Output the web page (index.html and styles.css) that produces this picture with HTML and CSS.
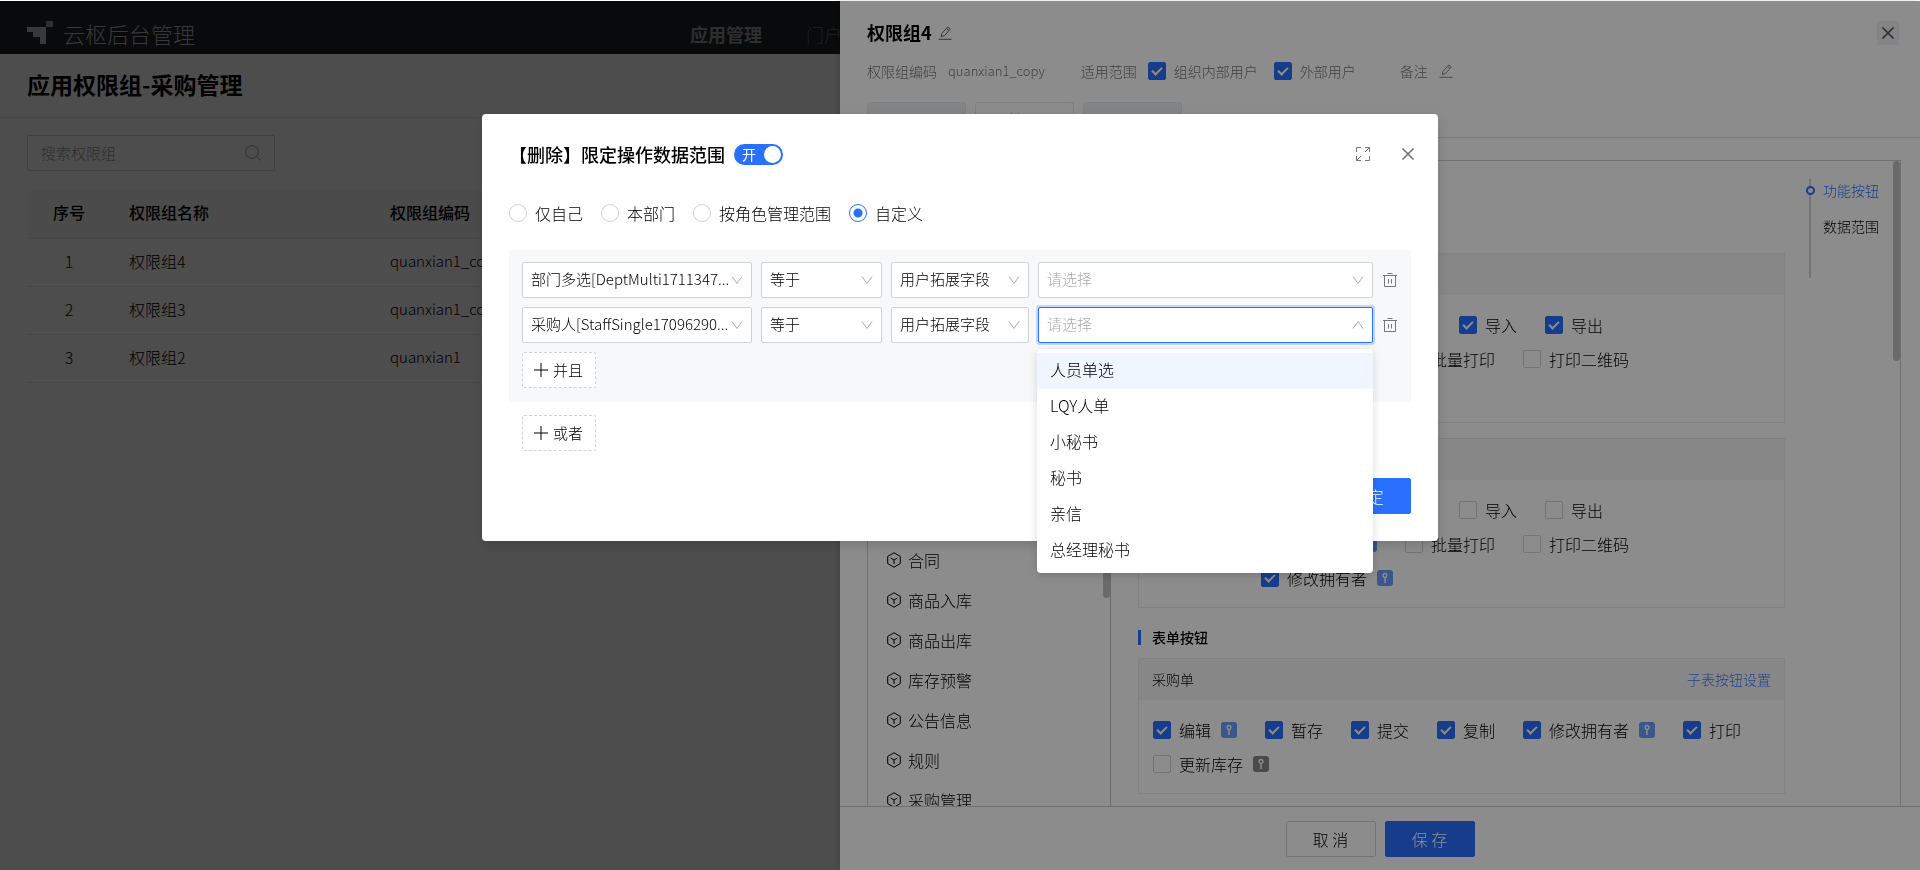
FILE: index.html
```html
<!DOCTYPE html>
<html lang="zh-CN">
<head>
  <meta charset="UTF-8">
  <meta name="viewport" content="width=device-width, initial-scale=1.0">
  <title>云枢后台管理</title>
  <link rel="stylesheet" href="styles.css">
</head>
<body>
  <!-- Shared icons -->
  <svg class="sprite" aria-hidden="true">
    <symbol id="i-down" viewBox="0 0 12 12"><path d="M1 2.5l5 7 5-7" fill="none" stroke="currentColor"/></symbol>
    <symbol id="i-up" viewBox="0 0 12 12"><path d="M1 9.5l5-7 5 7" fill="none" stroke="currentColor"/></symbol>
    <symbol id="i-close" viewBox="0 0 14 14"><path d="M1.5 1.5l11 11M12.5 1.5l-11 11" fill="none" stroke="currentColor" stroke-width="1.7"/></symbol>
    <symbol id="i-edit" viewBox="0 0 14 14"><path d="M.5 13.3h13M3.2 10.6l.7-3.2L9.8 1l2.4 2.2-5.8 6.5zM8.6 2.4l2.3 2.1" fill="none" stroke="currentColor"/></symbol>
    <symbol id="i-trash" viewBox="0 0 14 14"><path d="M0 2.5h14M4.5.5h5M1.5 2.5v11h11v-11M5.5 6v4.5M8.5 6v4.5" fill="none" stroke="currentColor"/></symbol>
    <symbol id="i-plus" viewBox="0 0 14 14"><path d="M7 0v14M0 7h14" fill="none" stroke="currentColor"/></symbol>
    <symbol id="i-box" viewBox="0 0 16 16"><path d="M8 .8l6.3 3.6v7.2L8 15.2l-6.3-3.6V4.4zM4.6 6L8 8l3.4-2M8 8v4" fill="none" stroke="currentColor"/></symbol>
    <symbol id="i-key" viewBox="0 0 16 16"><circle cx="8" cy="5.4" r="1.9" fill="none" stroke="#fff" stroke-width="1.3"/><path d="M8 7.3v5.7" stroke="#fff" stroke-width="1.5"/></symbol>
  </svg>

  <div class="app">
    <header class="topbar">
      <div class="brand">
        <svg class="logo" width="26" height="24" viewBox="0 0 26 24">
          <path d="M0 6h19v17h-6v-7H6v-5H0z" fill="#bbb"/>
          <path d="M19 0h7v6h-7z" fill="#999"/>
        </svg>
        云枢后台管理
      </div>
      <nav class="topnav">
        <a href="#" class="active">应用管理</a>
        <a href="#">门户管理</a>
      </nav>
    </header>

    <h1 class="page-title">应用权限组-采购管理</h1>

    <main class="page">
      <div class="search">
        <input type="text" placeholder="搜索权限组" aria-label="搜索权限组">
        <svg width="16" height="16" viewBox="0 0 16 16" fill="none" stroke="currentColor"><circle cx="7" cy="7" r="6.3"/><path d="M11.5 11.5l4 4"/></svg>
      </div>
      <table class="list">
        <thead>
          <tr><th class="no">序号</th><th class="name">权限组名称</th><th>权限组编码</th></tr>
        </thead>
        <tbody>
          <tr><td class="no">1</td><td>权限组4</td><td class="code">quanxian1_copy</td></tr>
          <tr><td class="no">2</td><td>权限组3</td><td class="code">quanxian1_copy</td></tr>
          <tr><td class="no">3</td><td>权限组2</td><td class="code">quanxian1</td></tr>
        </tbody>
      </table>
    </main>
  </div>

  <div class="mask"></div>

  <aside class="drawer">
    <div class="drawer-head">
      <div class="drawer-title">
        <h2>权限组4</h2>
        <svg class="edit" width="14" height="14"><use href="#i-edit"/></svg>
        <button class="drawer-close" aria-label="关闭"><svg width="14" height="14"><use href="#i-close"/></svg></button>
      </div>
      <div class="drawer-info">
        <div class="info"><span>权限组编码</span><span class="info-code">quanxian1_copy</span></div>
        <div class="info">
          <span>适用范围</span>
          <div class="scope">
            <label class="check"><input type="checkbox" checked>组织内部用户</label>
            <label class="check"><input type="checkbox" checked>外部用户</label>
          </div>
        </div>
        <div class="info"><span>备注</span><svg class="edit thin" width="14" height="14"><use href="#i-edit"/></svg></div>
      </div>
      <div class="tabs">
        <button class="tab" aria-label="成员"></button>
        <button class="tab active">管理</button>
        <button class="tab" aria-label="其他"></button>
      </div>
    </div>

    <div class="drawer-body">
      <div class="tree">
        <ul>
          <li><svg width="16" height="16"><use href="#i-box"/></svg>合同</li>
          <li><svg width="16" height="16"><use href="#i-box"/></svg>商品入库</li>
          <li><svg width="16" height="16"><use href="#i-box"/></svg>商品出库</li>
          <li><svg width="16" height="16"><use href="#i-box"/></svg>库存预警</li>
          <li><svg width="16" height="16"><use href="#i-box"/></svg>公告信息</li>
          <li><svg width="16" height="16"><use href="#i-box"/></svg>规则</li>
          <li><svg width="16" height="16"><use href="#i-box"/></svg>采购管理</li>
        </ul>
        <span class="thumb tree-thumb"></span>
      </div>

      <div class="perms">
        <h3 class="section">功能按钮</h3>
        <section class="card">
          <div class="card-head">列表按钮</div>
          <div class="card-body indent">
            <label class="check"><input type="checkbox" checked>新增</label>
            <label class="check"><input type="checkbox" checked>删除<svg class="key" width="16" height="16"><use href="#i-key"/></svg></label>
            <label class="check"><input type="checkbox" checked>导入</label>
            <label class="check"><input type="checkbox" checked>导出</label>
            <label class="check"><input type="checkbox">批量修改<svg class="key" width="16" height="16"><use href="#i-key"/></svg></label>
            <label class="check"><input type="checkbox">批量打印</label>
            <label class="check"><input type="checkbox">打印二维码</label>
            <label class="check"><input type="checkbox" checked>修改拥有者<svg class="key" width="16" height="16"><use href="#i-key"/></svg></label>
          </div>
        </section>
        <section class="card">
          <div class="card-head">视图按钮</div>
          <div class="card-body indent">
            <label class="check"><input type="checkbox">新增</label>
            <label class="check"><input type="checkbox">删除<svg class="key" width="16" height="16"><use href="#i-key"/></svg></label>
            <label class="check"><input type="checkbox">导入</label>
            <label class="check"><input type="checkbox">导出</label>
            <label class="check"><input type="checkbox">批量修改<svg class="key" width="16" height="16"><use href="#i-key"/></svg></label>
            <label class="check"><input type="checkbox">批量打印</label>
            <label class="check"><input type="checkbox">打印二维码</label>
            <label class="check"><input type="checkbox" checked>修改拥有者<svg class="key" width="16" height="16"><use href="#i-key"/></svg></label>
          </div>
        </section>

        <h3 class="section">表单按钮</h3>
        <section class="card">
          <div class="card-head">采购单<a href="#">子表按钮设置</a></div>
          <div class="card-body">
            <label class="check"><input type="checkbox" checked>编辑<svg class="key" width="16" height="16"><use href="#i-key"/></svg></label>
            <label class="check"><input type="checkbox" checked>暂存</label>
            <label class="check"><input type="checkbox" checked>提交</label>
            <label class="check"><input type="checkbox" checked>复制</label>
            <label class="check"><input type="checkbox" checked>修改拥有者<svg class="key" width="16" height="16"><use href="#i-key"/></svg></label>
            <label class="check"><input type="checkbox" checked>打印</label>
            <label class="check"><input type="checkbox">更新库存<svg class="key off" width="16" height="16"><use href="#i-key"/></svg></label>
          </div>
        </section>
      </div>

      <nav class="anchor">
        <a href="#" class="active">功能按钮</a>
        <a href="#">数据范围</a>
      </nav>
      <span class="thumb body-thumb"></span>
    </div>

    <div class="drawer-foot">
      <button class="btn">取 消</button>
      <button class="btn btn-primary">保 存</button>
    </div>
  </aside>

  <div class="mask modal-wrap">
    <div class="modal" role="dialog" aria-labelledby="modalTitle">
      <div class="modal-head">
        <h2 id="modalTitle">【删除】限定操作数据范围</h2>
        <button class="switch" role="switch" aria-checked="true">开</button>
        <div class="modal-tools">
          <button class="icon-btn" aria-label="全屏">
            <svg width="14" height="14" viewBox="0 0 14 14" fill="none" stroke="currentColor"><path d="M.5 5V.5H5M9 .5h4.5V5M13.5 9v4.5H9M5 13.5H.5V9M13.5.5L9 5M.5 13.5L5 9"/></svg>
          </button>
          <button class="icon-btn" aria-label="关闭"><svg width="14" height="14"><use href="#i-close"/></svg></button>
        </div>
      </div>

      <div class="radios">
        <label class="radio"><input type="radio" name="range">仅自己</label>
        <label class="radio"><input type="radio" name="range">本部门</label>
        <label class="radio"><input type="radio" name="range">按角色管理范围</label>
        <label class="radio"><input type="radio" name="range" checked>自定义</label>
      </div>

      <div class="group">
        <div class="cond">
          <div class="select field"><select aria-label="字段"><option>部门多选[DeptMulti1711347...</option></select><svg width="12" height="12"><use href="#i-down"/></svg></div>
          <div class="select op"><select aria-label="条件"><option>等于</option></select><svg width="12" height="12"><use href="#i-down"/></svg></div>
          <div class="select type"><select aria-label="类型"><option>用户拓展字段</option></select><svg width="12" height="12"><use href="#i-down"/></svg></div>
          <div class="select value"><select class="empty" aria-label="值"><option>请选择</option></select><svg width="12" height="12"><use href="#i-down"/></svg></div>
          <button class="icon-btn" aria-label="删除"><svg width="14" height="14"><use href="#i-trash"/></svg></button>
        </div>
        <div class="cond">
          <div class="select field"><select aria-label="字段"><option>采购人[StaffSingle17096290...</option></select><svg width="12" height="12"><use href="#i-down"/></svg></div>
          <div class="select op"><select aria-label="条件"><option>等于</option></select><svg width="12" height="12"><use href="#i-down"/></svg></div>
          <div class="select type"><select aria-label="类型"><option>用户拓展字段</option></select><svg width="12" height="12"><use href="#i-down"/></svg></div>
          <div class="select value open">
            <select class="empty" aria-label="值"><option>请选择</option></select><svg width="12" height="12"><use href="#i-up"/></svg>
            <ul class="dropdown" role="listbox">
              <li class="hover" role="option">人员单选</li>
              <li role="option">LQY人单</li>
              <li role="option">小秘书</li>
              <li role="option">秘书</li>
              <li role="option">亲信</li>
              <li role="option">总经理秘书</li>
            </ul>
          </div>
          <button class="icon-btn" aria-label="删除"><svg width="14" height="14"><use href="#i-trash"/></svg></button>
        </div>
        <button class="btn-add"><svg width="14" height="14"><use href="#i-plus"/></svg>并且</button>
      </div>
      <button class="btn-add or"><svg width="14" height="14"><use href="#i-plus"/></svg>或者</button>

      <div class="modal-foot">
        <button class="btn">取 消</button>
        <button class="btn btn-primary">确 定</button>
      </div>
    </div>
  </div>
</body>
</html>
```

FILE: styles.css
```css
*,
*::before,
*::after {
  margin: 0;
  padding: 0;
  box-sizing: border-box;
}

body {
  padding-top: 1px;
  height: 100vh;
  overflow: hidden;
  background: #fff;
  color: #000;
  font-family: "Noto Sans CJK SC", "Noto Sans", sans-serif;
  font-size: 16px;
  font-weight: 300;
  line-height: 24px;
}

button,
input,
select {
  font: inherit;
  color: inherit;
}

button {
  background: none;
  border: 0;
  cursor: pointer;
}

a {
  color: inherit;
  text-decoration: none;
}

ul {
  list-style: none;
}

svg {
  display: block;
  flex: none;
}

.sprite {
  position: absolute;
  width: 0;
  height: 0;
}

/* List page */
.topbar {
  display: flex;
  height: 53px;
  padding: 13px 27px 0;
  background: #1c2326;
  color: #bbb;
}

.brand {
  display: flex;
  align-items: center;
  gap: 10px;
  width: 663px;
  height: 38px;
  font-size: 22px;
}

.topnav {
  display: flex;
  align-items: center;
  gap: 44px;
  height: 40px;
  font-size: 18px;
  color: #666;
}

.topnav .active {
  font-weight: 700;
  color: #999;
}

.page-title {
  height: 64px;
  padding: 0 27px;
  border-bottom: 1px solid #ebebeb;
  font-size: 23px;
  font-weight: 700;
  line-height: 60px;
}

.page {
  padding: 17px 27px;
}

.search {
  display: flex;
  align-items: center;
  width: 248px;
  height: 36px;
  padding: 0 13px;
  border: 1px solid #d0d3d6;
  border-radius: 2px;
  color: #999;
}

.search input {
  flex: 1;
  min-width: 0;
  border: 0;
  background: none;
  font-size: 15px;
}

.search input::placeholder {
  color: #999;
}

.list {
  width: 100%;
  margin-top: 19px;
  border-collapse: collapse;
  table-layout: fixed;
}

.list th,
.list td {
  height: 48px;
  padding: 0 18px 3px;
  border-bottom: 1px solid #e6e6e6;
  text-align: left;
}

.list th {
  background: #f7f8fa;
  font-weight: 500;
}

.list .no {
  width: 84px;
  text-align: center;
}

.list .name {
  width: 261px;
}

.list .code {
  font-size: 15px;
}

.mask {
  position: fixed;
  inset: 1px 0 0;
  background: rgba(0, 0, 0, 0.45);
}

/* Shared controls */
.btn {
  width: 90px;
  height: 36px;
  padding-bottom: 1px;
  border: 1px solid #d0d3d6;
  border-radius: 2px;
  background: #fff;
}

.btn-primary {
  border-color: #2970ff;
  background: #2970ff;
  color: #fff;
}

.icon-btn {
  display: flex;
  align-items: center;
  justify-content: center;
  width: 16px;
  height: 16px;
  color: #777;
}

.check {
  display: flex;
  align-items: center;
}

.check input {
  appearance: none;
  flex: none;
  display: flex;
  justify-content: center;
  width: 18px;
  height: 18px;
  margin-right: 8px;
  border: 1px solid #d0d3d6;
  border-radius: 2px;
  background: #fff;
}

.check input:checked {
  border-color: #2970ff;
  background: #2970ff;
}

.check input:checked::after {
  content: "";
  width: 6px;
  height: 10px;
  margin-top: 2px;
  border: solid #fff;
  border-width: 0 2px 2px 0;
  transform: rotate(45deg);
}

.key {
  margin-left: 10px;
  border-radius: 3px;
  background: #6a9dff;
}

.key.off {
  background: #888;
}

.thumb {
  position: absolute;
  width: 7px;
  border-radius: 4px;
  background: #c1c1c1;
}

/* Drawer */
.drawer {
  position: fixed;
  top: 1px;
  right: 0;
  bottom: 0;
  display: flex;
  flex-direction: column;
  width: 1080px;
  background: #fff;
  box-shadow: -2px 0 8px rgba(0, 0, 0, 0.15);
}

.drawer-head {
  padding: 20px 21px 0 27px;
  border-bottom: 1px solid #dcdcdc;
}

.drawer-title {
  display: flex;
  align-items: center;
  gap: 6px;
  height: 24px;
}

.drawer-title h2 {
  padding-bottom: 2px;
  font-size: 18px;
  font-weight: 700;
}

.edit {
  color: #666;
}

.edit.thin {
  color: #888;
}

.drawer-close {
  display: flex;
  align-items: center;
  justify-content: center;
  width: 22px;
  height: 24px;
  margin-left: auto;
  background: #f0f1f4;
  color: #555;
}

.drawer-info {
  display: flex;
  gap: 36px;
  height: 20px;
  margin-top: 16px;
  color: #777;
  font-size: 14px;
  line-height: 20px;
}

.info {
  display: flex;
  align-items: center;
  gap: 11px;
}

.info-code {
  font-size: 13px;
}

.scope {
  display: flex;
}

.scope .check {
  margin-right: 8px;
}

.scope .check + .check {
  margin-left: 8px;
}

.tabs {
  display: flex;
  gap: 9px;
  margin-top: 21px;
}

.tab {
  width: 99px;
  height: 35px;
  border: 1px solid #e4e7ea;
  border-bottom: 0;
  border-radius: 4px 4px 0 0;
  background: #eef1f4;
}

.tab.active {
  background: #fff;
  color: #2970ff;
}

.drawer-body {
  position: relative;
  flex: 1;
  display: flex;
  min-height: 0;
  margin: 22px 19px 0 27px;
  border: 1px solid #ccc;
  border-bottom: 0;
  overflow: hidden;
}

.tree {
  position: relative;
  display: flex;
  flex-direction: column;
  justify-content: flex-end;
  width: 243px;
  border-right: 1px solid #c4c4c4;
  overflow: hidden;
}

.tree ul {
  margin-bottom: -14px;
}

.tree li {
  display: flex;
  align-items: center;
  gap: 6px;
  height: 40px;
  padding-left: 18px;
}

.tree-thumb {
  top: 160px;
  right: 0;
  height: 277px;
}

.perms {
  flex: 1;
  padding: 42px 0 0 27px;
}

.section {
  height: 15px;
  margin: 22px 0 13px;
  padding-left: 11px;
  border-left: 3px solid #2970ff;
  font-size: 14px;
  font-weight: 500;
  line-height: 14px;
}

.card {
  border: 1px solid #ececec;
}

.card + .card {
  margin-top: 15px;
}

.card-head {
  display: flex;
  justify-content: space-between;
  height: 41px;
  padding: 0 13px;
  background: #f6f6f6;
  font-size: 14px;
  line-height: 40px;
}

.card-head a {
  color: #3f7dff;
}

.card-body {
  display: flex;
  flex-wrap: wrap;
  padding: 13px 12px 12px 14px;
}

.card-body.indent {
  padding-left: 122px;
}

.card-body .check {
  height: 34px;
  margin-right: 28px;
}

.anchor {
  display: flex;
  flex-direction: column;
  gap: 12px;
  width: 91px;
  height: 99px;
  margin: 18px 0 0 24px;
  padding-left: 12px;
  border-left: 2px solid #d4d4d4;
  font-size: 14px;
}

.anchor a {
  position: relative;
  line-height: 22px;
  padding-bottom: 2px;
}

.anchor .active {
  color: #2970ff;
}

.anchor .active::before {
  content: "";
  position: absolute;
  top: 7px;
  left: -17px;
  width: 9px;
  height: 9px;
  border: 2px solid #2970ff;
  border-radius: 50%;
  background: #fff;
}

.body-thumb {
  top: 0;
  right: 0;
  height: 200px;
}

.drawer-foot {
  display: flex;
  justify-content: center;
  gap: 9px;
  height: 64px;
  padding-top: 14px;
  border-top: 1px solid #ccc;
}

/* Modal */
.modal-wrap {
  display: flex;
  align-items: flex-start;
  justify-content: center;
  padding-top: 113px;
}

.modal {
  width: 956px;
  padding: 27px;
  border-radius: 4px;
  background: #fff;
  box-shadow: 0 4px 12px rgba(0, 0, 0, 0.15);
}

.modal-head {
  display: flex;
  align-items: center;
  height: 28px;
  padding-bottom: 2px;
}

.modal-head h2 {
  font-size: 18px;
  font-weight: 500;
}

.switch {
  display: flex;
  align-items: center;
  justify-content: space-between;
  width: 49px;
  height: 21px;
  margin-left: 9px;
  padding: 0 2px 0 8px;
  border-radius: 11px;
  background: #2970ff;
  color: #fff;
  font-size: 14px;
  font-weight: 400;
}

.switch::after {
  content: "";
  width: 17px;
  height: 17px;
  border-radius: 50%;
  background: #fff;
}

.modal-tools {
  display: flex;
  gap: 29px;
  margin-left: auto;
  margin-right: -5px;
}

.radios {
  display: flex;
  gap: 18px;
  margin: 32px 0 25px;
}

.radio {
  display: flex;
  align-items: center;
}

.radio input {
  appearance: none;
  width: 18px;
  height: 18px;
  margin-right: 8px;
  border: 1px solid #d0d3d6;
  border-radius: 50%;
}

.radio input:checked {
  border-color: #2970ff;
  background: radial-gradient(#2970ff 4px, transparent 5px);
}

.group {
  display: flex;
  flex-direction: column;
  align-items: flex-start;
  gap: 9px;
  padding: 12px 13px 14px;
  background: #f7f8fa;
}

.cond {
  display: flex;
  align-items: center;
  gap: 9px;
  width: 100%;
}

.select {
  position: relative;
  height: 36px;
}

.select.field {
  width: 230px;
}

.select.op {
  width: 121px;
}

.select.type {
  width: 138px;
}

.select.value {
  flex: 1;
}

.select select {
  appearance: none;
  width: 100%;
  height: 36px;
  padding: 0 20px 2px 8px;
  border: 1px solid #d0d3d6;
  border-radius: 2px;
  background: #fff;
  font-size: 15px;
}

.select select.empty {
  color: #aaa;
}

.select svg {
  position: absolute;
  top: 12px;
  right: 9px;
  color: #aaa;
  pointer-events: none;
}

.select.open select {
  border-color: #2970ff;
  box-shadow: 0 0 0 2px rgba(41, 112, 255, 0.25);
}

.dropdown {
  position: absolute;
  top: 42px;
  left: -1px;
  right: 0;
  padding: 4px 0;
  border-radius: 4px;
  background: #fff;
  box-shadow: 0 2px 8px rgba(0, 0, 0, 0.15);
}

.dropdown li {
  padding: 0 13px 3px;
  line-height: 33px;
}

.dropdown .hover {
  background: #eff6ff;
}

.btn-add {
  display: flex;
  align-items: center;
  gap: 5px;
  height: 36px;
  padding: 0 12px 1px 11px;
  border: 1px dashed #d0d3d6;
  border-radius: 2px;
  background: #fff;
  font-size: 15px;
}

.btn-add.or {
  margin: 13px 0 0 13px;
}

.modal-foot {
  display: flex;
  justify-content: flex-end;
  gap: 9px;
  margin-top: 27px;
}
```
